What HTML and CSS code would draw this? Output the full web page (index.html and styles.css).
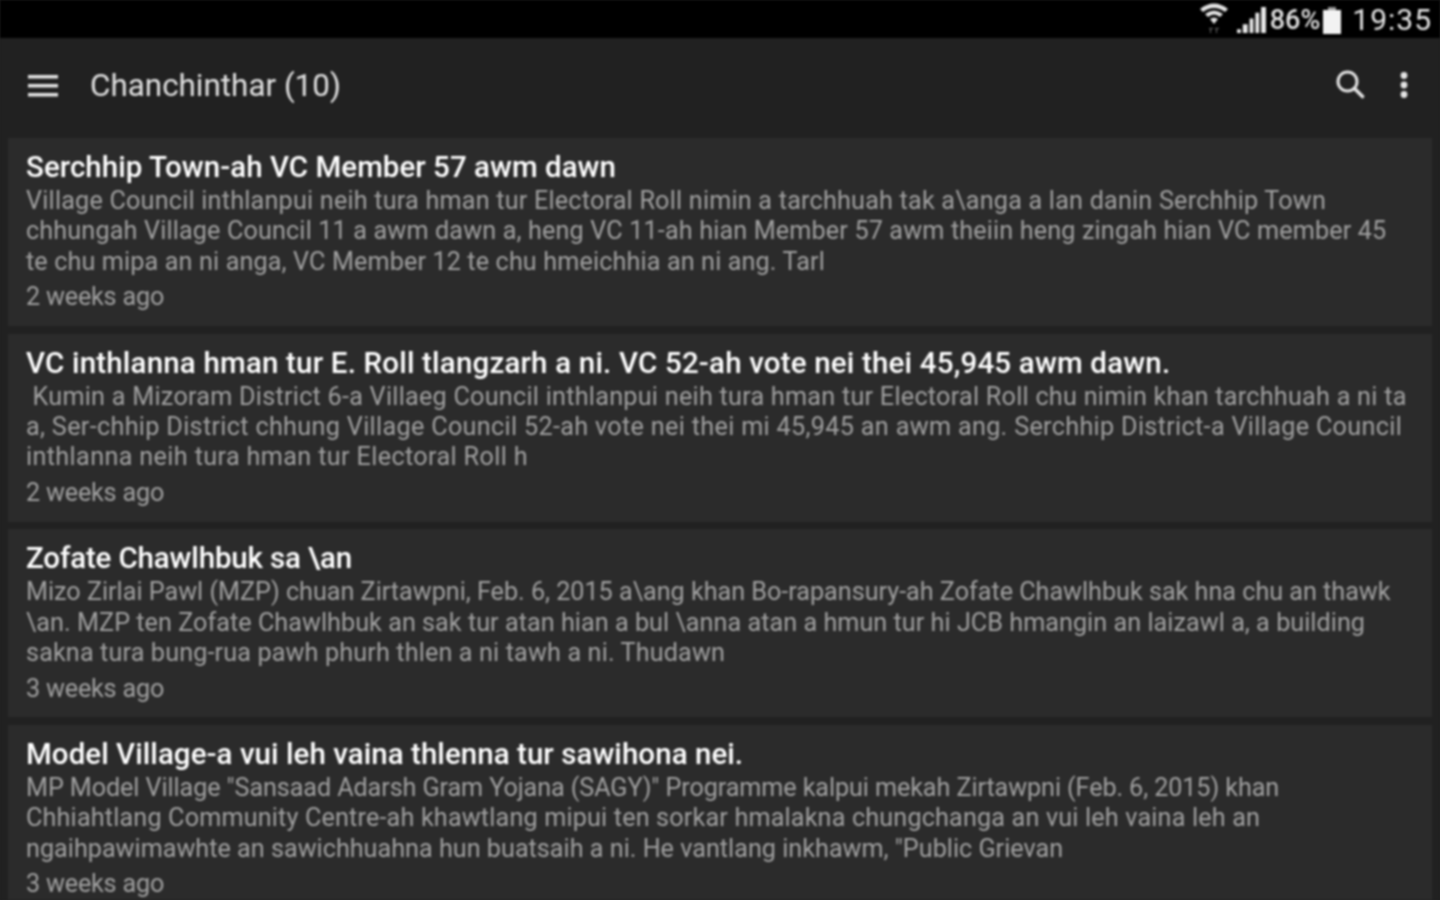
FILE: index.html
```html
<!DOCTYPE html>
<html lang="en">
<head>
<meta charset="utf-8">
<title>Chanchinthar</title>
<link rel="stylesheet" href="styles.css">
</head>
<body>
<div class="screen">
  <header class="status">
    <svg class="wifi" viewBox="0 0 30 36" width="30" height="36"><path d="M1 8 Q15 -3 29 8 L26 11 Q15 3 4 11Z M6 13 Q15 6 24 13 L21 16 Q15 11 9 16Z M11 18 Q15 15 19 18 L15 23Z" fill="#e4e4e4"/><path d="M10 27h4v1h-2v4h-1v-4h-1z M16 27h4v1h-2v4h-1v-4h-1z" fill="#666"/></svg>
    <svg class="signal" viewBox="0 0 30 28" width="29" height="27"><path d="M0 24h4v4H0z M6 19h5v9H6z M13 13h4v15h-4z M19 7h4v21h-4z M25 1h5v27h-5z" fill="#e8e8e8"/></svg>
    <span class="pct">86%</span>
    <span class="battery"></span>
    <span class="clock">19:35</span>
  </header>
  <div class="toolbar">
    <svg class="menu" viewBox="0 0 30 22" width="30" height="22"><path d="M0 0h30v3.4H0z M0 9h30v3.4H0z M0 18h30v3.4H0z" fill="#e4e4e4"/></svg>
    <h1 class="app-title">Chanchinthar (10)</h1>
    <svg class="search" viewBox="0 0 30 30" width="30" height="30"><circle cx="11.5" cy="11.5" r="9.5" fill="none" stroke="#e4e4e4" stroke-width="3"/><path d="M18.5 18.5 L26.5 26.5" stroke="#e4e4e4" stroke-width="3.6" stroke-linecap="round"/></svg>
    <svg class="more" viewBox="0 0 8 26" width="8" height="26"><circle cx="4" cy="3.5" r="3.4" fill="#e4e4e4"/><circle cx="4" cy="13" r="3.4" fill="#e4e4e4"/><circle cx="4" cy="22.5" r="3.4" fill="#e4e4e4"/></svg>
  </div>
  <main class="list">
    <article class="card">
      <h2 class="title"><span class="k03">Serchhip Town-ah VC Member 57 awm dawn</span></h2>
      <p class="body"><span class="k20">Village Council inthlanpui neih tura hman tur Electoral Roll nimin a tarchhuah tak a\anga a lan danin Serchhip Town</span><span class="k14">chhungah Village Council 11 a awm dawn a, heng VC 11-ah hian Member 57 awm theiin heng zingah hian VC member 45</span><span class="k12">te chu mipa an ni anga, VC Member 12 te chu hmeichhia an ni ang. Tarl</span></p>
      <p class="time">2 weeks ago</p>
    </article>
    <article class="card">
      <h2 class="title"><span class="k18">VC inthlanna hman tur E. Roll tlangzarh a ni. VC 52-ah vote nei thei 45,945 awm dawn.</span></h2>
      <p class="body"><span class="k25">&nbsp;Kumin a Mizoram District 6-a Villaeg Council inthlanpui neih tura hman tur Electoral Roll chu nimin khan tarchhuah a ni ta</span><span class="k32">a, Ser-chhip District chhung Village Council 52-ah vote nei thei mi 45,945 an awm ang. Serchhip District-a Village Council</span><span class="k36">inthlanna neih tura hman tur Electoral Roll h</span></p>
      <p class="time">2 weeks ago</p>
    </article>
    <article class="card">
      <h2 class="title"><span class="kn15">Zofate Chawlhbuk sa \an</span></h2>
      <p class="body"><span class="kn02">Mizo Zirlai Pawl (MZP) chuan Zirtawpni, Feb. 6, 2015 a\ang khan Bo-rapansury-ah Zofate Chawlhbuk sak hna chu an thawk</span><span class="k03">\an. MZP ten Zofate Chawlhbuk an sak tur atan hian a bul \anna atan a hmun tur hi JCB hmangin an laizawl a, a building</span><span class="k13">sakna tura bung-rua pawh phurh thlen a ni tawh a ni. Thudawn</span></p>
      <p class="time">3 weeks ago</p>
    </article>
    <article class="card">
      <h2 class="title"><span class="k05">Model Village-a vui leh vaina thlenna tur sawihona nei.</span></h2>
      <p class="body"><span class="kn10">MP Model Village "Sansaad Adarsh Gram Yojana (SAGY)" Programme kalpui mekah Zirtawpni (Feb. 6, 2015) khan</span><span class="k16">Chhiahtlang Community Centre-ah khawtlang mipui ten sorkar hmalakna chungchanga an vui leh vaina leh an</span><span class="k00">ngaihpawimawhte an sawichhuahna hun buatsaih a ni. He vantlang inkhawm, "Public Grievan</span></p>
      <p class="time">3 weeks ago</p>
    </article>
  </main>
</div>
</body>
</html>
```
FILE: styles.css
```css
html, body { margin: 0; padding: 0; background: #212121; }
.screen {
  width: 1440px;
  height: 900px;
  overflow: hidden;
  font-family: Roboto, "Noto Sans", sans-serif;
  background: #212121;
  filter: blur(0.8px);
}
.status {
  height: 38px;
  background: #000;
  display: flex;
  align-items: center;
  justify-content: flex-end;
  padding-right: 8px;
  box-sizing: border-box;
}
.wifi { margin-right: 8px; }
.signal { margin-right: 4px; }
.pct { color: #e0e0e0; font-size: 27px; font-weight: 500; margin-top: 2px; }
.battery {
  width: 18px; height: 24px; background: #f2f2f2; margin: 6px 0 0 3px; position: relative;
}
.battery::before {
  content: ""; position: absolute; left: 5px; top: -3px; width: 8px; height: 3px; background: #999;
}
.clock { color: #e6e6e6; font-size: 30px; margin-left: 11px; letter-spacing: 1px; }
.toolbar {
  height: 100px;
  display: flex;
  align-items: center;
  padding: 0 32px 4px 28px;
  box-sizing: border-box;
}
.app-title {
  margin: 0 0 2px 32px;
  flex: 1;
  color: #e2e2e2;
  font-size: 31.4px;
  font-weight: 400;
}
.search { margin-bottom: 2px; }
.more { margin: 0 0 3px 34px; }
.list {
  display: flex;
  flex-direction: column;
  gap: 7.67px;
  padding: 0 8px;
}
.card {
  background: #2b2b2b;
  height: 188px;
  padding: 11px 18px 0;
  box-sizing: border-box;
  flex: none;
}
.title {
  margin: 0 0 1px;
  color: #fff;
  font-size: 29.5px;
  font-weight: 500;
  line-height: 36px;
}
.body {
  margin: 0;
  color: #a0a0a0;
  font-size: 25.2px;
  line-height: 30.4px;
}
.body span, .title span { display: block; white-space: nowrap; }
.time {
  margin: 5px 0 0;
  color: #a0a0a0;
  font-size: 25.2px;
  line-height: 30px;
  letter-spacing: -0.2px;
}
/* per-line tracking: the reference's hinted glyph advances differ line by line */
.kn15 { letter-spacing: -0.15px; }
.kn10 { letter-spacing: -0.1px; }
.kn02 { letter-spacing: -0.02px; }
.k00 { letter-spacing: 0; }
.k03 { letter-spacing: 0.03px; }
.k05 { letter-spacing: 0.05px; }
.k12 { letter-spacing: 0.12px; }
.k13 { letter-spacing: 0.13px; }
.k14 { letter-spacing: 0.14px; }
.k16 { letter-spacing: 0.16px; }
.k18 { letter-spacing: 0.18px; }
.k20 { letter-spacing: 0.2px; }
.k25 { letter-spacing: 0.25px; }
.k32 { letter-spacing: 0.32px; }
.k36 { letter-spacing: 0.36px; }
```
